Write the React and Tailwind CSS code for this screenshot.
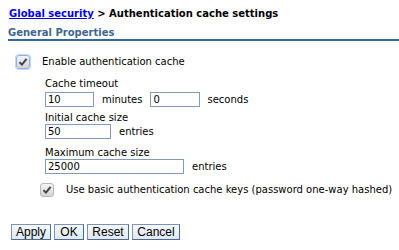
import React from "react";

function Check({ focused }) {
  return (
    <span
      className={`inline-flex w-[14px] h-[14px] shrink-0 items-center justify-center rounded-[3px] border ${
        focused ? "border-[#8fb2ee] shadow-[0_0_0_1px_#c3d6f5]" : "border-[#b8b8b8]"
      } bg-gradient-to-b from-[#f4f4f4] to-[#d4d4d4]`}
    >
      <svg width="10" height="10" viewBox="0 0 10 10">
        <path d="M1.5 5.2 L4 7.6 L8.6 1.8" fill="none" stroke="#444" strokeWidth="2" />
      </svg>
    </span>
  );
}

function Field({ value, w }) {
  return (
    <input
      readOnly
      value={value}
      className={`${w} h-[15px] border border-[#7f9db9] px-[2px] text-[10px] leading-none text-black outline-none`}
    />
  );
}

function Btn({ children, w }) {
  return (
    <button className={`${w} h-[16px] border border-[#7b93b4] border-r-[#4d6a8f] border-b-[#4d6a8f] bg-gradient-to-b from-[#f6f9fd] to-[#dfe8f5] text-[12px] leading-none text-black [font-family:'Liberation_Sans',Arial,sans-serif]`}>
      {children}
    </button>
  );
}

export default function App() {
  return (
    <div className="w-[399px] h-[250px] overflow-hidden bg-white text-[10px] text-black [font-family:'DejaVu_Sans',Verdana,sans-serif] pt-[7px]">
      <div className="pl-[9px] text-[10px] font-bold leading-[14px] whitespace-nowrap">
        <a href="#" className="text-[#0000ee] underline">Global security</a>
        <span> &gt; Authentication cache settings</span>
      </div>
      <div className="ml-[8px] mt-[6px] border-b-[2px] border-[#336699] text-[10px] font-bold leading-[12px] text-[#40658f]">
        General Properties
      </div>

      <div className="mt-[14px] pl-[16px] flex items-center gap-[12px] leading-[14px]">
        <Check focused />
        <span>Enable authentication cache</span>
      </div>

      <div className="pl-[45px] mt-[9px]">
        <div className="leading-[12px]">Cache timeout</div>
        <div className="flex items-center mt-[2px] leading-[15px]">
          <Field value="10" w="w-[49px]" />
          <span className="ml-[8px]">minutes</span>
          <span className="ml-[8px] flex"><Field value="0" w="w-[50px]" /></span>
          <span className="ml-[7px]">seconds</span>
        </div>

        <div className="leading-[12px] mt-[5px]">Initial cache size</div>
        <div className="flex items-center leading-[15px]">
          <Field value="50" w="w-[66px]" />
          <span className="ml-[8px]">entries</span>
        </div>

        <div className="leading-[12px] mt-[8px]">Maximum cache size</div>
        <div className="flex items-center leading-[15px]">
          <Field value="25000" w="w-[139px]" />
          <span className="ml-[8px]">entries</span>
        </div>
      </div>

      <div className="mt-[9px] pl-[40px] flex items-center gap-[12px] whitespace-nowrap leading-[14px]">
        <Check />
        <span>Use basic authentication cache keys (password one-way hashed)</span>
      </div>

      <div className="mt-[27px] pl-[11px] flex gap-[3px]">
        <Btn w="w-[40px]">Apply</Btn>
        <Btn w="w-[30px]">OK</Btn>
        <Btn w="w-[42px]">Reset</Btn>
        <Btn w="w-[48px]">Cancel</Btn>
      </div>
    </div>
  );
}
